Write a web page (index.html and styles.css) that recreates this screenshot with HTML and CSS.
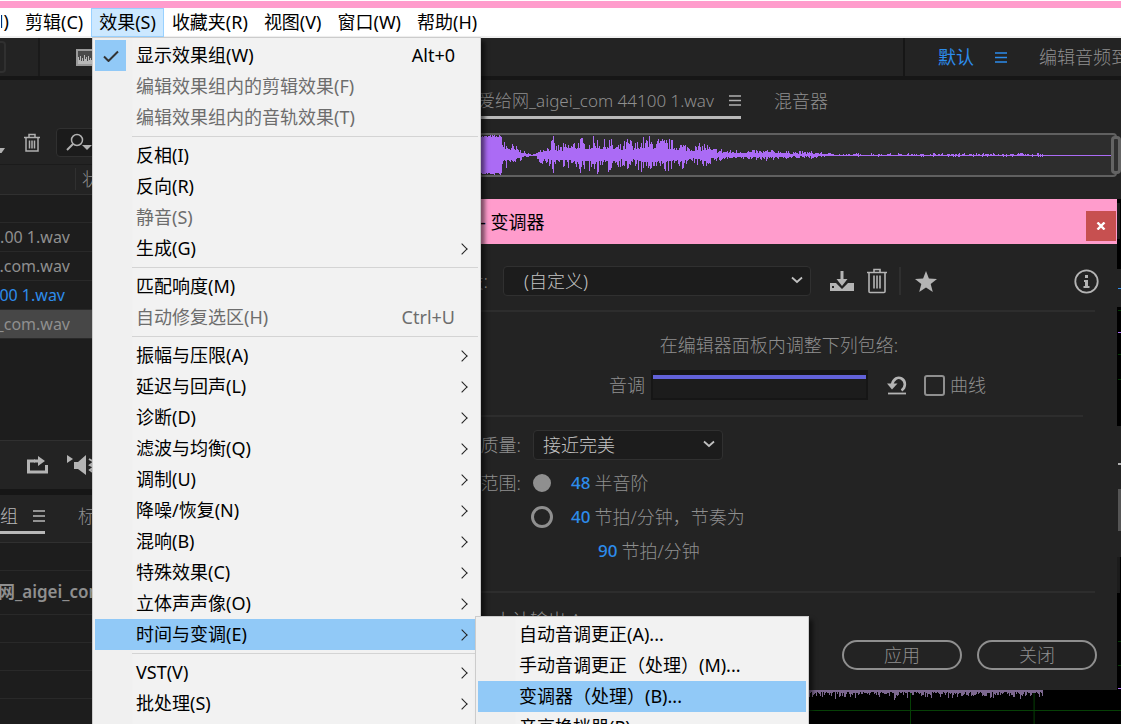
FILE: index.html
```html
<!DOCTYPE html>
<html lang="zh-CN">
<head>
<meta charset="utf-8">
<title>变调器</title>
<link rel="stylesheet" href="styles.css">
</head>
<body>
<div class="frame-edge"></div>
<nav class="menubar">
  <button class="menubar-item clipped">M)</button>
  <button class="menubar-item">剪辑(C)</button>
  <button class="menubar-item open">效果(S)</button>
  <button class="menubar-item">收藏夹(R)</button>
  <button class="menubar-item">视图(V)</button>
  <button class="menubar-item">窗口(W)</button>
  <button class="menubar-item">帮助(H)</button>
</nav>

<header class="toolbar">
  <button class="tool-edge" aria-label="工具"></button>
  <span class="tool-divider"></span>
  <svg class="wave-icon" width="24" height="17" viewBox="0 0 24 17"><rect x="1" y="1" width="22" height="15" fill="#4a4a4a" stroke="#9a9a9a" stroke-width="2"/><path d="M2 15V8h1v3h1V7h1v5h1V9h1v3h1V6h1v4h1V8h1v4h1V7h1v4h1V9h1v2h1V5h1v6h1V8h1v3h1V7h2v8z" fill="#b8b8b8"/></svg>
  <div class="workspaces">
    <button class="workspace active">默认</button>
    <svg width="12" height="11" viewBox="0 0 12 11"><path d="M0 1h12M0 5.500h12M0 10h12" stroke="#2d8ceb" stroke-width="1.500"/></svg>
    <button class="workspace">编辑音频到视频</button>
  </div>
</header>

<main class="work">
  <section class="side">
    <div class="file-tools">
      <svg class="caret" width="5" height="5" viewBox="0 0 5 5"><path d="M0 0h5L1.500 5H0z" fill="#b0b0b0"/></svg>
      <button class="icon-button" aria-label="删除"><svg width="18" height="20" viewBox="0 0 18 20" fill="none" stroke="#b0b0b0" stroke-width="1.500"><path d="M1 4.500h16M6 4V1.500h6V4M3 5v13h12V5M6.500 7.500v8M9 7.500v8M11.500 7.500v8"/></svg></button>
      <div class="search">
        <svg width="28" height="20" viewBox="0 0 28 20"><circle cx="12" cy="7" r="5.500" fill="none" stroke="#b0b0b0" stroke-width="1.500"/><path d="M8 11l-6 6" stroke="#b0b0b0" stroke-width="2"/><path d="M17 12h10l-5 5z" fill="#b0b0b0"/></svg>
        <input type="text" aria-label="搜索">
      </div>
    </div>
    <div class="file-head"><span class="status-col">状态</span></div>
    <ul class="files">
      <li class="file blank"></li>
      <li class="file"><span class="file-name">...00 1.wav</span></li>
      <li class="file"><span class="file-name">...com.wav</span></li>
      <li class="file current"><span class="file-name short">00 1.wav</span></li>
      <li class="file selected"><span class="file-name">_com.wav</span></li>
    </ul>
    <div class="transport">
      <button class="icon-button" aria-label="循环"><svg width="22" height="18" viewBox="0 0 22 18"><path d="M8 5H1.500v11h18V9" fill="none" stroke="#b4b4b4" stroke-width="3"/><path d="M7 3.500h4V0l7 5-7 5V6.500H7z" fill="#b4b4b4"/></svg></button>
      <button class="icon-button" aria-label="自动播放"><svg width="28" height="22" viewBox="0 0 28 22"><path d="M0 1l6 4-6 4zM7 8h4l8-7v20l-8-6H7z" fill="#b4b4b4"/><path d="M22 5l5 3-4 3 4 2-4 3 4 3" fill="none" stroke="#b4b4b4" stroke-width="2"/></svg></button>
    </div>
    <div class="rack">
      <div class="rack-tabs">
        <button class="rack-tab active">组<svg width="12" height="12" viewBox="0 0 12 12"><path d="M0 1h12M0 6h12M0 11h12" stroke="#b8b8b8" stroke-width="1.500"/></svg></button>
        <button class="rack-tab">标记</button>
      </div>
      <div class="rack-row"></div>
      <div class="rack-row title">网_aigei_com</div>
      <div class="rack-row"></div>
      <div class="rack-row"></div>
      <div class="rack-row"></div>
      <div class="rack-row"></div>
    </div>
  </section>

  <section class="editor">
    <div class="editor-tabs">
      <button class="editor-tab active">爱给网_aigei_com 44100 1.wav<svg width="12" height="11" viewBox="0 0 12 11"><path d="M0 1h12M0 5.500h12M0 10h12" stroke="#b0b0b0" stroke-width="1.500"/></svg></button>
      <button class="editor-tab">混音器</button>
    </div>
    <div class="overview">
      <svg class="overview-wave" viewBox="0 0 632 40" preserveAspectRatio="none"><path id="overview-path" fill="#ab6bf5" shape-rendering="crispEdges"/></svg>
      <span class="overview-handle"></span>
    </div>
    <svg class="canvas" viewBox="0 0 640 525" preserveAspectRatio="none">
      <rect width="640" height="525" fill="#000"/>
      <path fill="#232323" d="M636 70h4v38h-4zM636 227h4v131h-4z"/>
      <path fill="#1c1c1c" d="M636 4h3v36h-3zM636 358h3v36h-3z"/>
      <path fill="#555" d="M637 290h3v42h-3z"/>
      <path fill="#2d8ceb" d="M637 89h3v1h-3z"/>
      <path fill="#b0b0b0" d="M637 264h3v2h-3z"/>
      <path fill="#053a05" d="M637 111h3v1h-3zM637 155h3v1h-3zM637 180h3v1h-3zM637 442h3v1h-3zM637 466h3v1h-3z"/>
      <path fill="#ab6bf5" d="M637 133h3v1h-3zM637 489h3v1h-3z"/>
      <path fill="#064006" d="M0 511h640v1H0zM430 491h1v34h-1zM553 491h1v34h-1z"/>
      <path id="main-path" fill="#7c688f" shape-rendering="crispEdges"/>
    </svg>
  </section>
</main>

<section class="dialog" role="dialog" aria-labelledby="dialog-title">
  <header class="dialog-bar">
    <h1 class="dialog-title" id="dialog-title">- 变调器</h1>
    <button class="close" aria-label="关闭窗口"><svg width="10" height="8" viewBox="0 0 10 8"><path d="M1.500 0.500l7 7M8.500 0.500l-7 7" stroke="#fff" stroke-width="2.400"/></svg></button>
  </header>
  <div class="preset">
    <label class="label" for="preset">预设:</label>
    <span class="select-wrap grow"><select id="preset" class="select wide"><option>(自定义)</option></select><svg class="chevron" width="12" height="8" viewBox="0 0 12 8"><path d="M1 1.500l5 4.500 5-4.500" fill="none" stroke="#c0c0c0" stroke-width="1.800"/></svg></span>
    <div class="preset-tools">
      <button class="icon-button" aria-label="保存预设"><svg width="26" height="20" viewBox="0 0 26 20"><path d="M1 12h6l6 6 6-6h6v8H1z" fill="#b4b4b4"/><path d="M11.500 0h3v8h4L13 15 7.500 8h4z" fill="#b4b4b4"/><path d="M3 15h2v2H3z" fill="#232323"/></svg></button>
      <button class="icon-button" aria-label="删除预设"><svg width="20" height="26" viewBox="0 0 20 26" fill="none" stroke="#b4b4b4" stroke-width="1.600"><path d="M0 4.500h20M7 4V1.500h6V4M2 4.500V23.500q0 1 1 1h14q1 0 1-1V4.500M7 7.500v13M10 7.500v13M13 7.500v13"/></svg></button>
      <span class="preset-divider"></span>
      <button class="icon-button" aria-label="收藏"><svg width="22" height="21" viewBox="0 0 22 21"><path d="M11 0l2.900 7.500 8.100.4-6.300 5 2.100 8L11 16.500 4.200 21l2.100-8.100L0 7.900l8.100-.4z" fill="#b4b4b4"/></svg></button>
    </div>
    <button class="icon-button info" aria-label="信息"><svg width="25" height="25" viewBox="0 0 25 25"><circle cx="12.500" cy="12.500" r="11.200" fill="none" stroke="#b4b4b4" stroke-width="1.800"/><path d="M11 6h3v3h-3zM10 11h4v6h1.500v2h-6v-2H11v-4h-1z" fill="#b4b4b4"/></svg></button>
  </div>
  <hr class="rule">
  <p class="hint">在编辑器面板内调整下列包络:</p>
  <div class="pitch">
    <span class="pitch-label">音调</span>
    <div class="envelope"></div>
    <button class="icon-button" aria-label="重置"><svg width="21" height="20" viewBox="0 0 21 20"><path d="M5 9.500C6.500 3.500 11 1.500 14.500 3.500c4.500 2.500 4.500 9 0 12" fill="none" stroke="#b4b4b4" stroke-width="2.600"/><path d="M0 8.500h10.500L5 14.500z" fill="#b4b4b4"/><path d="M1 18.500h18" stroke="#b4b4b4" stroke-width="1.800"/></svg></button>
    <label class="check"><input type="checkbox" class="tick">曲线</label>
  </div>
  <hr class="rule inset">
  <div class="quality">
    <label class="label" for="quality">质量:</label>
    <span class="select-wrap"><select id="quality" class="select"><option>接近完美</option></select><svg class="chevron" width="12" height="8" viewBox="0 0 12 8"><path d="M1 1.500l5 4.500 5-4.500" fill="none" stroke="#c0c0c0" stroke-width="1.800"/></svg></span>
  </div>
  <div class="range">
    <span class="label">范围:</span>
    <label class="option"><input type="radio" name="range" class="radio" checked><b class="value">48</b>半音阶</label>
    <label class="option second"><input type="radio" name="range" class="radio"><b class="value">40</b>节拍/分钟，节奏为</label>
    <span class="option tempo"><b class="value">90</b>节拍/分钟</span>
  </div>
  <hr class="rule">
  <footer class="dialog-foot">
    <span class="output">小计输出 ^</span>
    <div class="actions">
      <button class="pill">应用</button>
      <button class="pill">关闭</button>
    </div>
  </footer>
</section>

<ul class="menu main-menu" role="menu">
  <li class="item"><span class="ticked"><svg width="16" height="12" viewBox="0 0 16 12"><path d="M1 6.500L5.500 11 15 1.500" fill="none" stroke="#333" stroke-width="2"/></svg></span><button class="item-text">显示效果组(W)</button><kbd class="keys">Alt+0</kbd></li>
  <li class="item off"><button class="item-text" disabled>编辑效果组内的剪辑效果(F)</button></li>
  <li class="item off"><button class="item-text" disabled>编辑效果组内的音轨效果(T)</button></li>
  <li class="sep"></li>
  <li class="item"><button class="item-text">反相(I)</button></li>
  <li class="item"><button class="item-text">反向(R)</button></li>
  <li class="item off"><button class="item-text" disabled>静音(S)</button></li>
  <li class="item more"><button class="item-text">生成(G)</button></li>
  <li class="sep"></li>
  <li class="item"><button class="item-text">匹配响度(M)</button></li>
  <li class="item off"><button class="item-text" disabled>自动修复选区(H)</button><kbd class="keys">Ctrl+U</kbd></li>
  <li class="sep"></li>
  <li class="item more"><button class="item-text">振幅与压限(A)</button></li>
  <li class="item more"><button class="item-text">延迟与回声(L)</button></li>
  <li class="item more"><button class="item-text">诊断(D)</button></li>
  <li class="item more"><button class="item-text">滤波与均衡(Q)</button></li>
  <li class="item more"><button class="item-text">调制(U)</button></li>
  <li class="item more"><button class="item-text">降噪/恢复(N)</button></li>
  <li class="item more"><button class="item-text">混响(B)</button></li>
  <li class="item more"><button class="item-text">特殊效果(C)</button></li>
  <li class="item more"><button class="item-text">立体声声像(O)</button></li>
  <li class="item more lit"><button class="item-text">时间与变调(E)</button>
    <ul class="menu submenu" role="menu">
      <li class="item"><button class="item-text">自动音调更正(A)...</button></li>
      <li class="item"><button class="item-text">手动音调更正（处理）(M)...</button></li>
      <li class="item lit"><button class="item-text">变调器（处理）(B)...</button></li>
      <li class="item"><button class="item-text">音高换挡器(P)</button></li>
    </ul>
  </li>
  <li class="sep"></li>
  <li class="item more"><button class="item-text">VST(V)</button></li>
  <li class="item more"><button class="item-text">批处理(S)</button></li>
</ul>
<script src="wave.js"></script>
</body>
</html>
```
FILE: styles.css
```css
* { box-sizing: border-box; }
html, body { height: 100%; }
body {
  margin: 0;
  display: flex;
  flex-direction: column;
  position: relative;
  overflow: hidden;
  background: #161616;
  color: #8f8f8f;
  font: 300 18px/24px "Noto Sans", "Noto Sans CJK SC", sans-serif;
}
button, input, select, kbd { font: inherit; color: inherit; }
button { background: none; border: 0; padding: 0; margin: 0; white-space: nowrap; }
ul { list-style: none; margin: 0; padding: 0; }
svg { display: block; flex: none; }

.frame-edge { height: 8px; flex: none; background: #ff9ccc; border-top: 1px solid #fff; }
.menubar {
  display: flex;
  flex: none;
  height: 30px;
  background: #fff;
  border-bottom: 2px solid #f0f0f0;
  color: #000;
  font-weight: 400;
}
.menubar-item { height: 29px; padding: 0 7px 2px; border: 1px solid transparent; }
.menubar-item.clipped { width: 17px; display: flex; justify-content: flex-end; overflow: hidden; }
.menubar-item.open { background: #cce8ff; border-color: #99d1ff; }

.toolbar {
  display: flex;
  align-items: center;
  flex: none;
  height: 42px;
  padding-bottom: 0;
  background: #232323;
  border-bottom: 4px solid #161616;
}
.tool-edge { width: 6px; height: 32px; border: 2px solid #303030; border-left: 0; border-radius: 0 4px 4px 0; }
.tool-divider { width: 2px; align-self: stretch; margin: 0 36px 0 32px; background: #1a1a1a; }
.workspaces {
  display: flex;
  align-items: center;
  align-self: stretch;
  gap: 21px;
  width: 218px;
  margin-left: auto;
  padding-left: 33px;
  border-left: 2px solid #161616;
  overflow: hidden;
}
svg + .workspace { margin-left: 11px; }
.workspace.active { color: #2d8ceb; font-weight: 400; }

.work { flex: 1; min-height: 0; display: grid; grid-template-columns: 478px 1fr; grid-template-rows: minmax(0, 1fr); }
.side { display: flex; flex-direction: column; min-height: 0; background: #161616; }
.icon-button { display: inline-flex; align-items: center; }
.file-tools {
  display: flex;
  align-items: flex-end;
  height: 85px;
  padding-bottom: 7px;
  background: #232323;
  border-bottom: 1px solid #1b1b1b;
}
.caret { margin-bottom: 4px; }
.file-tools .icon-button { margin: 0 15px 4px 18px; }
.search {
  display: flex;
  align-items: center;
  flex: 1;
  height: 29px;
  padding-left: 8px;
  background: #1b1b1b;
  border: 1px solid #303030;
  border-radius: 4px;
}
.search input { flex: 1; min-width: 0; background: none; border: 0; }
.file-head { height: 30px; padding: 3px 0 3px 75px; background: #232323; border-bottom: 1px solid #303030; }
.status-col { display: block; padding-left: 6px; border-left: 1px solid #303030; line-height: 22px; }
.files { flex: 1; background: #1d1d1d; }
.file { display: flex; height: 29px; align-items: center; border-bottom: 1px solid #292929; font-size: 16px; font-weight: 400; }
.file.blank { height: 28px; }
.file-name { display: flex; justify-content: flex-end; width: 70px; overflow: hidden; white-space: nowrap; }
.file-name.short { width: 65px; }
.file.current { color: #2d8ceb; }
.file.selected { background: #474747; }
.transport { display: flex; align-items: center; gap: 18px; height: 49px; padding-left: 27px; background: #232323; border-top: 1px solid #303030; }
.rack { height: 229px; margin-top: 6px; background: #1d1d1d; }
.rack-tabs { display: flex; gap: 33px; height: 48px; padding: 4px 0 8px; background: #232323; border-bottom: 1px solid #303030; }
.rack-tab { display: flex; align-items: center; gap: 15px; padding-top: 2px; border-bottom: 3px solid transparent; }
.rack-tab.active { color: #b8b8b8; border-color: #b8b8b8; }
.rack-row { height: 28px; border-bottom: 1px solid #292929; overflow: hidden; }
.rack-row.title { height: 44px; line-height: 42px; font-weight: 600; font-size: 17px; margin-left: -2px; }

.editor { display: flex; flex-direction: column; min-width: 0; min-height: 0; background: #232323; }
.editor-tabs { display: flex; gap: 33px; height: 39px; flex: none; }
.editor-tab { display: flex; align-items: center; gap: 15px; padding-top: 5px; border-bottom: 3px solid transparent; }
.editor-tab.active { border-color: #b8b8b8; font-size: 17px; }
.overview {
  display: flex;
  position: relative;
  flex: none;
  height: 44px;
  margin: 14px 4px 22px 0;
  background: #2d2d2d;
  border: 2px solid #606060;
  border-radius: 4px;
}
.overview-wave { width: 100%; height: 40px; }
.overview-handle { position: absolute; right: -6px; top: 1px; width: 10px; height: 38px; background: #303030; border: 3px solid #646464; border-radius: 4px; }
.canvas { flex: 1; width: 100%; min-height: 0; }

.dialog { position: absolute; left: 441px; right: 4px; top: 199px; padding-bottom: 20px; background: #232323; }
.dialog-bar { display: flex; align-items: center; height: 45px; padding: 0 1px 0 39px; background: #ff9ccc; color: #000; }
.dialog-title { flex: 1; margin: 0; font: inherit; font-weight: 400; }
.close { display: flex; align-items: center; justify-content: center; width: 30px; height: 30px; margin-top: 8px; background: #c75050; }
.preset { display: flex; align-items: center; padding: 22px 18px 14px 0; }
.label { flex: none; text-align: right; width: 80px; }
.preset .label { width: 47px; margin-right: 15px; }
.select-wrap { position: relative; width: 190px; }
.select-wrap.grow { flex: 1; max-width: 308px; }
.select { display: block; width: 100%; height: 30px; padding: 0 9px; appearance: none; background: #1c1c1c; border: 1px solid #303030; border-radius: 4px; color: #c4c4c4; }
.select.wide { padding-left: 20px; }
.chevron { position: absolute; right: 8px; top: 10px; pointer-events: none; }
.preset-tools { display: flex; align-items: center; gap: 12px; margin-left: 18px; }
.preset-divider { width: 2px; height: 28px; margin-right: 2px; background: #2f2f2f; }
.info { margin-left: auto; }
.rule { height: 2px; margin: 0 22px 0 0; border: 0; background: #2d2d2d; }
.rule.inset { margin-right: 34px; }
.hint { margin: 21px 0 13px; text-align: center; }
.pitch { display: flex; align-items: center; padding: 0 0 15px 168px; }
.envelope { width: 217px; height: 30px; margin: 0 19px 0 6px; border: 2px solid #161616; border-top-width: 5px; background: #1c1c1c; box-shadow: inset 0 4px #6262d8; }
.check { display: flex; align-items: center; gap: 5px; margin-left: 16px; }
.tick { appearance: none; width: 21px; height: 21px; margin: 0; border: 2px solid #8f8f8f; border-radius: 3px; }
.quality { display: flex; align-items: center; gap: 12px; padding: 13px 0 11px; }
.range { display: grid; grid-template-columns: 80px 1fr; align-items: center; gap: 10px; padding-bottom: 28px; }
.option { display: flex; align-items: center; }
.option.second, .option.tempo { grid-column: 2; }
.option.tempo { padding-left: 67px; }
.value { margin-right: 4px; color: #2d8ceb; font-weight: 500; font-size: 17px; }
.radio { appearance: none; width: 22px; height: 22px; margin: 0 18px 0 0; border: 3px solid #8f8f8f; border-radius: 50%; }
.radio:checked { width: 18px; height: 18px; margin: 0 20px 0 2px; background: #8f8f8f; }
.dialog-foot { padding: 15px 20px 0 53px; }
.output { display: block; height: 32px; }
.actions { display: flex; justify-content: flex-end; gap: 15px; }
.pill { width: 120px; height: 30px; border: 2px solid #8f8f8f; border-radius: 15px; }

.menu { position: absolute; padding: 2px; background: linear-gradient(90deg, #f0f0f0 39px, #f2f2f2 40px); border: 1px solid #ccc; color: #000; font-weight: 400; box-shadow: 4px 4px 4px rgba(0, 0, 0, 0.5); }
.main-menu { left: 92px; top: 37px; bottom: -1px; width: 389px; }
.submenu { left: 100%; top: -3px; margin-left: -3px; width: 334px; }
.item { position: relative; display: flex; align-items: center; height: 31px; padding: 0 23px 2px 41px; }
.item.off { color: #6d6d6d; }
.item.lit { background: #91c9f7; }
.item.more::after { content: ""; position: absolute; right: 12px; top: 12px; width: 7px; height: 7px; border: solid #222; border-width: 1px 1px 0 0; transform: rotate(45deg); }
.ticked { position: absolute; left: 0; top: 0; width: 31px; height: 31px; display: flex; align-items: center; justify-content: center; background: #91c9f7; }
.item-text { flex: 1; text-align: left; }
.sep { height: 7px; margin-left: 37px; padding-top: 3px; }
.sep::before { content: ""; display: block; height: 1px; background: #d4d4d4; }
```
FILE: wave.js
```js
// Peak envelope of the clip: [x, half height].
const peaks = [[0,20],[21,20],[24,15],[32,12],[38,8],[44,4],[50,1],[56,2],[58,8],[68,11],[73,19],[76,11],[86,13],[96,17],[100,20],[104,16],[116,20],[122,15],[128,20],[133,12],[140,12],[148,20],[152,12],[160,19],[166,20],[178,18],[185,18],[194,15],[203,14],[212,10],[224,14],[230,8],[245,6],[262,5],[285,6],[310,4],[330,4],[348,2],[352,1],[366,1],[370,2],[560,2],[562,1]];
let seed = 7;
function random() {
  seed = (seed * 16807) % 2147483647;
  return seed / 2147483647;
}
function level(x) {
  for (let i = 1; i < peaks.length; i++) {
    const [x0, y0] = peaks[i - 1], [x1, y1] = peaks[i];
    if (x <= x1) return y0 + (y1 - y0) * (x - x0) / (x1 - x0);
  }
  return 0.5;
}
function reach(x) {
  const body = x < 22 ? 0.9 : 0.34;
  const spike = Math.pow(random(), 2);
  return Math.max(0.5, Math.round(level(x) * (body + (1 - body) * spike)));
}
let overview = "";
for (let x = 0; x < 632; x++) {
  const quiet = x > 352 && random() < 0.5;
  const up = quiet ? 0.5 : reach(x);
  const down = quiet ? 0.5 : reach(x);
  overview += `M${x} ${20 - up}h1v${up + down}h-1z`;
}
document.getElementById("overview-path").setAttribute("d", overview);

let track = "";
for (let x = 300; x < 562; x++) {
  const depth = 2 + 7 * random() * random() + (x % 9 === 0 ? 2 : 0);
  track += `M${x} 491h1v${depth}h-1z`;
}
document.getElementById("main-path").setAttribute("d", track);
```
